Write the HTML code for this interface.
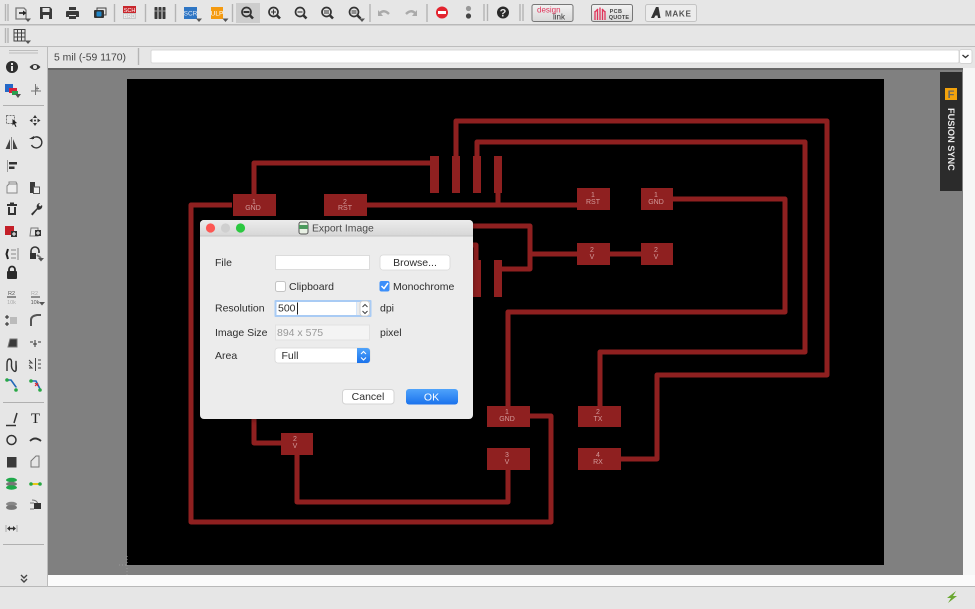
<!DOCTYPE html>
<html><head><meta charset="utf-8"><style>
html,body{margin:0;padding:0;width:975px;height:609px;overflow:hidden;background:#e6e6e6}
svg{display:block;font-family:"Liberation Sans",sans-serif;filter:blur(.35px)}
.s{stroke:#b4b4b4;stroke-width:1.4;fill:none}
.d{fill:#3a3a3a}
.l{stroke:#3a3a3a;fill:none;stroke-width:1.6}
.p{font-size:7px;fill:#d29a9a;text-anchor:middle}
.t{font-size:10.5px;fill:#2e2e2e}
</style></head><body>
<svg width="975" height="609" viewBox="0 0 975 609" xmlns="http://www.w3.org/2000/svg">
<defs>
<linearGradient id="tb" x1="0" y1="0" x2="0" y2="1"><stop offset="0" stop-color="#ececec"/><stop offset="1" stop-color="#d6d6d6"/></linearGradient>
<linearGradient id="bl" x1="0" y1="0" x2="0" y2="1"><stop offset="0" stop-color="#4fa3fb"/><stop offset="1" stop-color="#1a72ec"/></linearGradient>
<linearGradient id="bt" x1="0" y1="0" x2="0" y2="1"><stop offset="0" stop-color="#f2f2f2"/><stop offset="1" stop-color="#d8d8d8"/></linearGradient>
<filter id="sh" x="-10%" y="-10%" width="120%" height="125%"><feDropShadow dx="0" dy="1" stdDeviation="3" flood-color="#000" flood-opacity=".35"/></filter>
</defs>
<rect width="975" height="609" fill="#e6e6e6"/>
<!-- canvas -->
<rect x="47" y="68" width="916" height="507" fill="#808080"/>
<rect x="47" y="68" width="916" height="2" fill="#666"/>
<rect x="963" y="68" width="12" height="507" fill="#f6f6f6"/>
<rect x="48" y="575" width="927" height="11" fill="#fbfbfb"/>
<rect x="0" y="586" width="975" height="1" fill="#b9b9b9"/>
<rect x="127" y="79" width="757" height="486" fill="#000"/>
<path d="M127 556V575M119 565H127" stroke="#999" stroke-dasharray="1 2" fill="none"/>
<!-- traces -->
<g fill="none" stroke="#8f2020" stroke-width="5" stroke-linejoin="round">
<path d="M456 156V121H827V375H657V459H620"/>
<path d="M477 156V142H805V352H600V406"/>
<path d="M673 199H785V312H508V406"/>
<path d="M254 194V163H431"/>
<path d="M367 205H577M498 192V205"/>
<path d="M232 205H191V522H551V416H530"/>
<path d="M470 226H530V269H498M530 254H641"/>
<path d="M470 245H476V262"/>
<path d="M254 418V443H281M297 455V502H508V470"/>
</g>
<g fill="#8f2020">
<rect x="430" y="156" width="9" height="37"/><rect x="452" y="156" width="8" height="37"/><rect x="473" y="156" width="8" height="37"/><rect x="494" y="156" width="8" height="37"/>
<rect x="473" y="260" width="8" height="37"/><rect x="494" y="260" width="8" height="37"/>
<rect x="233" y="194" width="43" height="22"/><rect x="324" y="194" width="43" height="22"/>
<rect x="577" y="188" width="33" height="22"/><rect x="641" y="188" width="32" height="22"/>
<rect x="577" y="243" width="33" height="22"/><rect x="641" y="243" width="32" height="22"/>
<rect x="487" y="406" width="43" height="21"/><rect x="578" y="406" width="43" height="21"/>
<rect x="487" y="448" width="43" height="22"/><rect x="578" y="448" width="43" height="22"/>
<rect x="281" y="433" width="32" height="22"/>
</g>
<g class="p">
<text x="254" y="204">1</text><text x="253" y="210">GND</text>
<text x="345" y="204">2</text><text x="345" y="210">RST</text>
<text x="593" y="197">1</text><text x="593" y="204">RST</text>
<text x="656" y="197">1</text><text x="656" y="204">GND</text>
<text x="592" y="252">2</text><text x="592" y="259">V</text>
<text x="656" y="252">2</text><text x="656" y="259">V</text>
<text x="507" y="414">1</text><text x="507" y="421">GND</text>
<text x="598" y="414">2</text><text x="598" y="421">TX</text>
<text x="507" y="457">3</text><text x="507" y="464">V</text>
<text x="598" y="457">4</text><text x="598" y="464">RX</text>
<text x="295" y="441">2</text><text x="295" y="448">V</text>
</g>
<!-- fusion panel -->
<rect x="940" y="72" width="22" height="119" fill="#2b2b2b"/>
<rect x="945" y="88" width="12" height="12" fill="#f2a20c"/>
<text x="951" y="98" font-size="11" font-weight="bold" fill="#666" text-anchor="middle">F</text>
<text transform="translate(948 108) rotate(90)" font-size="9.2" font-weight="bold" fill="#e8e8e8">FUSION SYNC</text>
<!-- toolbars lines -->
<rect x="0" y="24" width="975" height="1.5" fill="#b9b9b9"/>
<rect x="0" y="46" width="975" height="1" fill="#bdbdbd"/>
<path class="s" d="M5.5 4V21M8 4V21M114.5 4V22M145.5 4V22M175.5 4V22M232.5 4V22M370 4V22M427 4V22M484 4V21M487.5 4V21M520 4V21M523 4V21M5.5 28V43M8 28V43M138.5 48V65"/>
<!-- toolbar icons -->
<path d="M16 8h8l2 2v9H16z" fill="none" stroke="#777" stroke-width="1.3"/><path d="M19 13h6" stroke="#222" stroke-width="1.6"/><path d="M23 10.500l3.500 2.500-3.500 2.500z" fill="#222"/>
<path d="M25 18.500h6l-3 3.500z" fill="#555"/>
<path class="d" d="M40 7h10l2 2v10H40z"/><rect x="42.500" y="8" width="7" height="4" fill="#e6e6e6"/><rect x="43" y="15" width="6" height="4" fill="#e6e6e6"/>
<path class="d" d="M69 7h7v3h-7zM67 11h11a1 1 0 0 1 1 1v5h-3v-2H69v2h-3v-5a1 1 0 0 1 1-1zM69 16h7v3h-7z"/>
<rect x="97" y="8" width="9" height="7" fill="none" stroke="#444"/><rect x="94" y="10" width="10" height="8" rx="1" fill="#333"/><rect x="96.500" y="11.500" width="5" height="5" rx="1" fill="#1f86c9"/>
<rect x="123" y="6" width="13" height="13" fill="#c9c9c9"/><rect x="123" y="6" width="13" height="7" fill="#c8262c"/><text x="129.500" y="12" font-size="5.500" fill="#fff" text-anchor="middle">SCH</text><text x="129.500" y="18" font-size="5.500" fill="#fff" text-anchor="middle">BRD</text>
<g class="d"><rect x="154.500" y="7" width="3" height="12" rx=".6"/><rect x="158.500" y="7" width="3" height="12" rx=".6"/><rect x="162.500" y="7" width="3" height="12" rx=".6"/></g>
<path d="M154.500 11H165.500" stroke="#999"/>
<rect x="184" y="7" width="13" height="12" fill="#2f76c4"/><text x="190.500" y="15.500" font-size="6.500" fill="#dfe9f6" text-anchor="middle">SCR</text><path d="M196 18.500h6l-3 3.500z" fill="#555"/>
<rect x="211" y="7" width="12" height="12" fill="#f49a10"/><text x="217" y="15.500" font-size="6.500" fill="#fff" text-anchor="middle">ULP</text><path d="M222.500 18.500h6l-3 3.500z" fill="#555"/>
<rect x="236" y="3" width="24" height="20" fill="#cdcdcd"/>
<g fill="none" stroke="#333" stroke-width="1.700">
<circle cx="246.500" cy="12" r="4.500"/><path d="M250 15.500l3 3" stroke-width="2.600"/><path d="M243.500 12h6" stroke-width="2"/>
<circle cx="273.500" cy="12" r="4.500"/><path d="M277 15.500l3 3" stroke-width="2.600"/><path d="M271 12h5M273.500 9.500v5" stroke-width="1.100"/>
<circle cx="300" cy="12" r="4.500"/><path d="M303.500 15.500l3 3" stroke-width="2.600"/><path d="M297.500 12h5" stroke-width="1.100"/>
<circle cx="326.500" cy="12" r="4.500"/><path d="M330 15.500l3 3" stroke-width="2.600"/><path d="M324 11h5M324 13h5" stroke-width="1"/>
<circle cx="354" cy="12" r="4.500"/><path d="M357.500 15.500l3 3" stroke-width="2.600"/><path d="M351.500 11h5M351.500 13h5" stroke-width="1"/>
</g>
<path d="M359 18.500h6l-3 3.500z" fill="#555"/>
<path d="M380 13q4-4 9 1" stroke="#aaa" stroke-width="2.400" fill="none"/><path d="M378 10v6h5z" fill="#aaa"/>
<path d="M415 13q-4-4-9 1" stroke="#aaa" stroke-width="2.400" fill="none"/><path d="M417 10v6h-5z" fill="#aaa"/>
<circle cx="442" cy="12.500" r="6" fill="#e3242f"/><rect x="438" y="11" width="8" height="3" fill="#fff"/>
<circle cx="468.500" cy="8.500" r="2.600" fill="#999"/><circle cx="468.500" cy="16" r="2.600" fill="#444"/>
<circle cx="503" cy="12.500" r="6" fill="#2a2a2a"/><text x="503" y="16.500" font-size="11" font-weight="bold" fill="#e6e6e6" text-anchor="middle">?</text>
<rect x="532" y="4.500" width="41" height="17" rx="2" fill="url(#bt)" stroke="#777"/>
<text x="537" y="12.500" font-size="8" fill="#e0345a">design</text><text x="553" y="19.500" font-size="8" fill="#333">link</text>
<rect x="591.500" y="4.500" width="41" height="17" rx="2" fill="url(#bt)" stroke="#777"/>
<path d="M595 20v-9M597.500 9v11M600 7.500v12.500M602.500 9v11M605 11v9M595 12l3-3M602 9l3 3" stroke="#e0345a" stroke-width="1.300" fill="none"/>
<text x="616" y="13" font-size="5.500" fill="#444" letter-spacing=".4" text-anchor="middle" font-weight="bold">PCB</text><text x="619" y="19" font-size="5.500" fill="#444" letter-spacing=".2" text-anchor="middle" font-weight="bold">QUOTE</text>
<rect x="645.500" y="4.500" width="51" height="17" rx="2" fill="#ececec" stroke="#c4c4c4"/>
<path d="M651 18l5-11h2.500l2 11h-2.500l-.5-2.500h-2l-1.500 2.500z" fill="#333"/>
<text x="665" y="16.500" font-size="8.200" font-weight="bold" fill="#555" letter-spacing=".6">MAKE</text>
<!-- grid icon -->
<path d="M14 29.500H25V41H14zM14 33H25M14 37H25M17.500 29.500V41M21.500 29.500V41" fill="none" stroke="#444"/>
<path d="M25 40.500h6l-3 3.500z" fill="#555"/>
<!-- coord row -->
<text x="54" y="60.500" font-size="10.400" fill="#444">5 mil (-59 1170)</text>
<rect x="151" y="50" width="808" height="13" rx="1.500" fill="#fff" stroke="#d8d8d8"/>
<rect x="959.500" y="49.500" width="12.500" height="14" rx="2" fill="#fff" stroke="#d4d4d4"/>
<path d="M962.500 55l3 2.500 3-2.500" fill="none" stroke="#333" stroke-width="1.400"/>
<!-- left panel -->
<rect x="47" y="47" width="1" height="540" fill="#bcbcbc"/>
<path d="M9 50.500H38M9 53H38" stroke="#bcbcbc"/>
<path d="M3 105.500H44M3 402.500H44M3 544.500H44" stroke="#b0b0b0"/>
<circle cx="12" cy="67" r="6" fill="#2e2e2e"/><rect x="11" y="66" width="2" height="5" fill="#e6e6e6"/><rect x="11" y="63" width="2" height="2" fill="#e6e6e6"/>
<path d="M29.500 67q5.500-6 11 0q-5.500 6-11 0z" fill="#333"/><circle cx="35" cy="67" r="2" fill="#e6e6e6"/>
<rect x="5" y="84" width="8" height="8" fill="#2468c8"/><rect x="9" y="88" width="8" height="5" fill="#d8203a"/><rect x="12" y="91" width="6" height="4" fill="#28a050"/><path d="M15 94h6l-3 4z" fill="#555"/>
<path d="M35.500 84V95M31 91H41M35 88.500h4M37 86.500v4" stroke="#777" fill="none"/>
<rect x="6.500" y="115.500" width="8" height="8" fill="none" stroke="#777" stroke-dasharray="2 1"/><path d="M12.500 119l4.500 4-2 .5 1.500 3-1 .5-1.500-3-1.500 1.500z" fill="#222"/>
<path d="M35 115l2 3h-4zM35 126l2-3h-4zM29.500 120.500l3-2v4zM40.500 120.500l-3-2v4z" fill="#333"/><circle cx="35" cy="120.500" r="1" fill="#333"/>
<path d="M11.500 137V150" stroke="#888" stroke-width="1"/><path d="M10 139v10l-4.500 0zM13 139v10l4.500 0z" fill="#444"/>
<path d="M32 139a5.500 5.500 0 1 1-.5 6" fill="none" stroke="#333" stroke-width="1.400"/><path d="M30 141h5v-3z" fill="#333" transform="translate(-1 -2)"/>
<path d="M7.500 160V172" stroke="#999"/><rect x="9" y="162" width="8" height="2.500" fill="#333"/><rect x="9" y="166.500" width="5.500" height="2.500" fill="#333"/>
<path d="M9 184h8v9H7v-7zM9 184v-2h7l1 2" fill="#eee" stroke="#888"/>
<path class="d" d="M30 182h5v11h-5z"/><rect x="33.500" y="187" width="6" height="6.500" fill="#eee" stroke="#555"/>
<path d="M7 205h10M9 207v7h6v-7M10 203.500h4" fill="none" stroke="#333" stroke-width="2"/>
<path d="M31 214l6-6a3.500 3.500 0 0 1 3-5l-1.500 2 1.500 1.500 2-1.500a3.500 3.500 0 0 1-4.500 4.500l-5 6z" fill="#333"/>
<rect x="5" y="226" width="9" height="9" fill="#c41f28"/><rect x="11" y="231" width="6" height="6" fill="#333"/><path d="M14 232v4M12 234h4" stroke="#fff"/>
<path d="M31 228h7v8h-8z" fill="none" stroke="#777"/><rect x="35" y="230" width="6" height="6" fill="#333"/><path d="M38 231v4M36 233h4" stroke="#fff"/>
<path d="M8 249l-1.500 5 1.500 5" fill="none" stroke="#222" stroke-width="2"/><path d="M11 250h5M11 254h5M11 258h5M18 248v12" stroke="#888" fill="none"/>
<path d="M31 253v-2a4 4 0 0 1 8 0v2" fill="none" stroke="#333" stroke-width="1.600"/><rect x="30" y="253" width="6" height="6" fill="#333"/><path d="M37 255l4 3" stroke="#777" stroke-width="2"/><path d="M38 258h6l-3 3.500z" fill="#555"/>
<path d="M9 272v-2.500a3 3 0 0 1 6 0v2.500" fill="none" stroke="#2a2a2a" stroke-width="1.800"/><rect x="7" y="271" width="10" height="8" rx="1" fill="#2a2a2a"/>
<text x="11.500" y="295" font-size="5.500" fill="#555" text-anchor="middle">R2</text><path d="M7 297H16" stroke="#333"/><text x="11.500" y="304" font-size="5.500" fill="#aaa" text-anchor="middle">10k</text>
<text x="34.500" y="295" font-size="5.500" fill="#aaa" text-anchor="middle">R2</text><path d="M31 297H40" stroke="#333"/><text x="35" y="304" font-size="5.500" fill="#555" text-anchor="middle">10k</text><path d="M39 302h6l-3 3.500z" fill="#555"/>
<path d="M7 315v4M5 317h4M7 322v4M5 324h4" stroke="#222"/><rect x="10" y="317" width="7" height="7" fill="#bbb"/>
<path d="M31 326V320q0-4 6-5h4" fill="none" stroke="#555" stroke-width="2"/>
<path d="M8 347l2-8h7v8z" fill="#3a3a3a" stroke="#777"/>
<path d="M30 342h3M38 342h3M35 340v7M33 344h4" stroke="#333" fill="none"/>
<path d="M7 371v-7q0-5 2.500-5t2 5 2.500 7 2-7q0-5 0 0v7" fill="none" stroke="#333" stroke-width="1.400"/>
<path d="M29 360l3 3-3 0M29 365l3 3-3 0M35.500 358V371M38 360h3M38 364h3M38 368h3" fill="none" stroke="#444"/>
<path d="M7 380h4l5 7 0 .5" fill="none" stroke="#2369b8" stroke-width="1.600"/><circle cx="7" cy="380" r="1.800" fill="#28a745"/><circle cx="16" cy="390" r="1.800" fill="#28a745"/>
<path d="M31 381h5l4 8" fill="none" stroke="#2369b8" stroke-width="1.600"/><circle cx="31" cy="381" r="1.800" fill="#28a745"/><circle cx="40" cy="390" r="1.800" fill="#28a745"/><path d="M35 383l3 3M38 383l-3 3" stroke="#e0202a"/>
<path d="M6 425.500H16M14 423l3-10" stroke="#333" stroke-width="1.500" fill="none"/>
<text x="35.500" y="423" font-size="15" fill="#222" text-anchor="middle" font-family="Liberation Serif">T</text>
<circle cx="11.500" cy="440" r="4.500" fill="none" stroke="#333" stroke-width="1.500"/>
<path d="M30 441q5-5 11 0" fill="none" stroke="#333" stroke-width="1.800"/>
<rect x="7" y="457" width="9.500" height="10.500" fill="#3a3a3a"/>
<path d="M31 467v-6l5-5h3v11z" fill="none" stroke="#777"/>
<ellipse cx="11.500" cy="480" rx="5.500" ry="2.200" fill="#1fa84a"/><ellipse cx="11.500" cy="484" rx="5.500" ry="2.200" fill="#777"/><ellipse cx="11.500" cy="487.500" rx="5.500" ry="2.200" fill="#1fa84a"/>
<path d="M31 484H39" stroke="#e6c617" stroke-width="2"/><circle cx="31" cy="484" r="1.800" fill="#28a745"/><circle cx="40" cy="484" r="1.800" fill="#28a745"/>
<ellipse cx="11.500" cy="504" rx="5.500" ry="2.200" fill="#888"/><ellipse cx="11.500" cy="507.500" rx="5.500" ry="2.400" fill="#777"/>
<path d="M30 503h4M30 509h4M32 500q6 0 6 6" fill="none" stroke="#777"/><rect x="34" y="503" width="7" height="6" fill="#333"/>
<path d="M6 525V532M17 525V532" stroke="#aaa"/><path d="M8 528.500h7" stroke="#333" stroke-width="1.500"/><path d="M10 526v5l-3-2.500zM13 526v5l3-2.500z" fill="#333"/>
<path d="M21 575l3 3 3-3M21 579l3 3 3-3" fill="none" stroke="#444" stroke-width="1.400"/>
<!-- status bolt -->
<path d="M956 591l-9 7h4l-3 5 9-7h-4l3-5z" fill="#6aa832"/>
<!-- dialog -->
<g filter="url(#sh)"><rect x="200" y="220" width="273" height="199" rx="4" fill="#ececec"/></g>
<path d="M200 236v-12a4 4 0 0 1 4-4h265a4 4 0 0 1 4 4v12z" fill="url(#tb)"/>
<rect x="200" y="235.500" width="273" height="1" fill="#c4c4c4"/>
<circle cx="210.500" cy="228" r="4.600" fill="#fc5753"/><circle cx="225.500" cy="228" r="4.600" fill="#cfcfcf"/><circle cx="240.500" cy="228" r="4.600" fill="#2bc840"/>
<rect x="299" y="222" width="9" height="12" rx="2" fill="#e8f0e4" stroke="#555"/><rect x="299" y="225" width="9" height="4" fill="#4c9a5e"/>
<text x="312" y="231.500" font-size="10.400" fill="#4a4a4a">Export Image</text>
<text class="t" x="215" y="266">File</text>
<rect x="275.500" y="255.500" width="94" height="14" fill="#fff" stroke="#dcdcdc"/>
<rect x="380" y="255" width="70" height="15" rx="3" fill="#fff" stroke="#d8d8d8" stroke-width=".8"/>
<text class="t" x="415" y="266" text-anchor="middle">Browse...</text>
<rect x="275.500" y="281.500" width="10" height="10" rx="2" fill="#fff" stroke="#c4c4c4"/>
<text class="t" x="289" y="290">Clipboard</text>
<rect x="379.500" y="281" width="10" height="10.500" rx="2" fill="#3c8ffa"/>
<path d="M381.500 286l2.500 2.500 4-5.500" fill="none" stroke="#fff" stroke-width="1.500"/>
<text class="t" x="393" y="290">Monochrome</text>
<text class="t" x="215" y="311.500">Resolution</text>
<rect x="274.500" y="300" width="97" height="17" rx="1" fill="#a9cbf4"/>
<rect x="276.500" y="302" width="80" height="13" fill="#fff"/>
<rect x="357" y="302" width="13" height="13" fill="#ececec"/>
<text class="t" x="278" y="311.500" fill="#222">500</text><path d="M297.500 302.500V314.500" stroke="#222"/>
<rect x="360" y="301" width="9.500" height="15" rx="3" fill="#fff" stroke="#cfcfcf"/>
<path d="M362.500 307l2.500-2.500 2.500 2.500M362.500 311l2.500 2.500 2.500-2.500" fill="none" stroke="#444"/>
<text class="t" x="380" y="311.500">dpi</text>
<text class="t" x="215" y="336">Image Size</text>
<rect x="275.500" y="325" width="94" height="15" fill="#f4f4f4" stroke="#e2e2e2"/>
<text x="277" y="336" font-size="10.500" fill="#9a9a9a">894 x 575</text>
<text class="t" x="380" y="336">pixel</text>
<text class="t" x="215" y="359">Area</text>
<rect x="275" y="348" width="95" height="15" rx="3" fill="#fff" stroke="#d8d8d8" stroke-width=".8"/>
<path d="M357 348h10a3 3 0 0 1 3 3v9a3 3 0 0 1-3 3h-10z" fill="url(#bl)"/>
<path d="M361 354l2.500-2.500 2.500 2.500M361 357.500l2.500 2.500 2.500-2.500" fill="none" stroke="#fff" stroke-width="1.100"/>
<text class="t" x="281.500" y="359">Full</text>
<rect x="342.500" y="389.500" width="51.500" height="14.500" rx="3" fill="#fff" stroke="#d4d4d4"/>
<text class="t" x="368" y="400" text-anchor="middle">Cancel</text>
<rect x="406" y="389" width="52" height="15.500" rx="3" fill="url(#bl)"/>
<text x="431.500" y="400.500" font-size="10.500" fill="#fff" text-anchor="middle">OK</text>
</svg>
</body></html>
